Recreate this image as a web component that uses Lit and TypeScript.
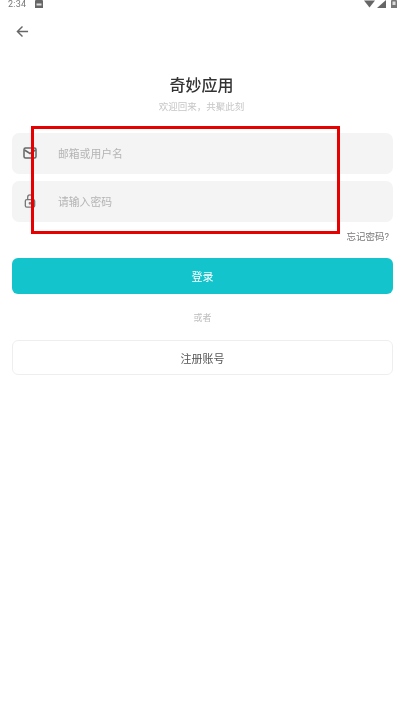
import { LitElement, html, css } from "lit";
import { customElement } from "lit/decorators.js";

@customElement("app-root")
export class AppRoot extends LitElement {
  static styles = css`
    :host {
      display: block;
      position: relative;
      width: 403px;
      height: 720px;
      overflow: hidden;
      background: #fff;
      font-family: "Roboto", "Noto Sans CJK SC", sans-serif;
      color: #333;
    }
    .page { display: flex; flex-direction: column; height: 100%; filter: blur(0.5px); }
    .status {
      display: flex; align-items: center; height: 8px; padding: 0 6px 0 8px; gap: 9px;
      font-size: 9px; color: #777; letter-spacing: 0.2px;
    }
    .status .right { margin-left: auto; display: flex; align-items: center; gap: 2px; }
    .status svg { display: block; }
    .status .batt { margin-left: 3px; }
    .back { display: flex; height: 16px; padding: 17px 0 0 16px; }
    .title { margin-top: 34px; text-align: center; font-size: 16px; font-weight: 500; line-height: 22px; color: #333; }
    .sub { margin-top: 3px; text-align: center; font-size: 9.500px; line-height: 13px; color: #c6c6c6; }
    .form { display: flex; flex-direction: column; padding: 0 10px 0 12px; }
    .field {
      display: flex; align-items: center; height: 41px; box-sizing: border-box; padding-bottom: 2px;
      border-radius: 7px; background: #f4f4f4;
      padding-left: 11px; gap: 21px; font-size: 10.800px; color: #b4b4b4;
    }
    .field svg { flex: none; }
    .field + .field { margin-top: 7px; }
    .fields { margin-top: 20px; }
    .forgot { margin-top: 8px; padding-right: 4px; text-align: right; font-size: 9.500px; line-height: 13px; color: #777; }
    .login {
      margin-top: 15px; height: 36px; display: flex; align-items: center; justify-content: center;
      border-radius: 6px; background: #14c4cd; color: #fff; font-size: 11px;
    }
    .or { margin-top: 18px; text-align: center; font-size: 9px; line-height: 13px; color: #bdbdbd; }
    .register {
      margin-top: 15px; height: 35px; box-sizing: border-box; display: flex; align-items: center; justify-content: center;
      border-radius: 6px; border: 1px solid #eee; background: #fff; color: #555; font-size: 11px;
    }
    .mark { position: absolute; left: 31px; top: 126px; width: 309px; height: 108px; box-sizing: border-box; border: 3px solid #e60000; }
  `;

  render() {
    return html`
      <div class="page">
        <div class="status">
          <span>2:34</span>
          <svg width="8" height="8" viewBox="0 0 8 8"><path d="M1 0h6a1 1 0 0 1 1 1v7H0V1a1 1 0 0 1 1-1z" fill="#666"/><rect x="1.500" y="3.500" width="5" height="2" fill="#ddd"/></svg>
          <div class="right">
            <svg width="11" height="8" viewBox="0 0 11 8"><path d="M0 0.500h11L5.500 7.500z" fill="#666"/></svg>
            <svg width="9" height="8" viewBox="0 0 9 8"><path d="M0 8L9 0v8z" fill="#666"/></svg>
            <svg class="batt" width="6" height="8" viewBox="0 0 6 8"><path d="M1 0h4a1 1 0 0 1 1 1v7H0V1a1 1 0 0 1 1-1z" fill="#777"/><rect x="1.500" y="1.500" width="3" height="3.500" fill="#ddd"/></svg>
          </div>
        </div>
        <div class="back">
          <svg width="13" height="13" viewBox="0 0 14 14" fill="none" stroke="#666" stroke-width="1.500"><path d="M13 7H2M7 1.500L1.500 7 7 12.500"/></svg>
        </div>
        <div class="title">奇妙应用</div>
        <div class="sub">欢迎回来，共聚此刻</div>
        <div class="form">
          <div class="fields">
            <div class="field">
              <svg width="14" height="12" viewBox="0 0 14 12" fill="none" stroke="#666" stroke-width="1.500"><rect x="1" y="1" width="12" height="10" rx="1.500"/><path d="M1.500 3l5.500 3.500L12.500 3"/></svg>
              <span>邮箱或用户名</span>
            </div>
            <div class="field">
              <svg width="14" height="14" viewBox="0 0 14 15" fill="none" stroke="#777" stroke-width="1.400"><rect x="2" y="6" width="10" height="8" rx="1.500"/><path d="M4.500 6V3.500a2.500 2.500 0 0 1 5 0V6"/><circle cx="7" cy="10" r=".8" fill="#777"/></svg>
              <span>请输入密码</span>
            </div>
          </div>
          <div class="forgot">忘记密码?</div>
          <div class="login">登录</div>
          <div class="or">或者</div>
          <div class="register">注册账号</div>
        </div>
      </div>
      <div class="mark"></div>
    `;
  }
}
